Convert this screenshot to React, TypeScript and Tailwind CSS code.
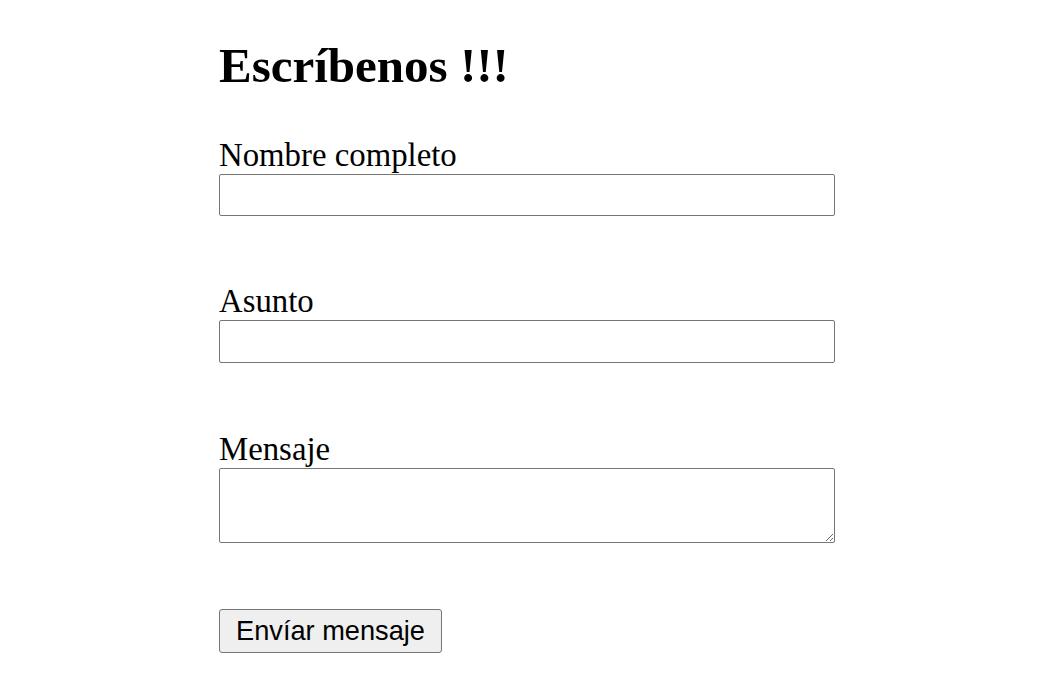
export default function App() {
  return (
    <main className="min-h-screen bg-white">
      <div className="ml-[219px] w-[616px] pt-[38px] font-['Liberation_Serif',serif] text-black">
        {/* Heading */}
        <h1 className="text-[49px] font-bold leading-[55px]">Escríbenos !!!</h1>

        <form className="mt-[44px] flex flex-col" onSubmit={(e) => e.preventDefault()}>
          <label htmlFor="nombre" className="block text-[32.8px] leading-[37px]">
            Nombre completo
          </label>
          <input
            id="nombre"
            type="text"
            className="block h-[42px] w-full rounded-[2px] border border-[#767676] bg-white px-1 text-[26px] outline-none"
          />

          <label htmlFor="asunto" className="mt-[67px] block text-[32.8px] leading-[37px]">
            Asunto
          </label>
          <input
            id="asunto"
            type="text"
            className="block h-[43px] w-full rounded-[2px] border border-[#767676] bg-white px-1 text-[26px] outline-none"
          />

          <label htmlFor="mensaje" className="mt-[68px] block text-[32.8px] leading-[37px]">
            Mensaje
          </label>
          <textarea
            id="mensaje"
            className="block h-[75px] w-full resize rounded-[2px] border border-[#767676] bg-white px-1 text-[26px] outline-none"
          />

          <div className="mt-[66px]">
            <button
              type="submit"
              className="h-[44px] w-[223px] rounded-[3px] border border-[#767676] bg-[#efefef] font-['Liberation_Sans',Arial,sans-serif] text-[27.2px] leading-none text-black"
            >
              Envíar mensaje
            </button>
          </div>
        </form>
      </div>
    </main>
  );
}
